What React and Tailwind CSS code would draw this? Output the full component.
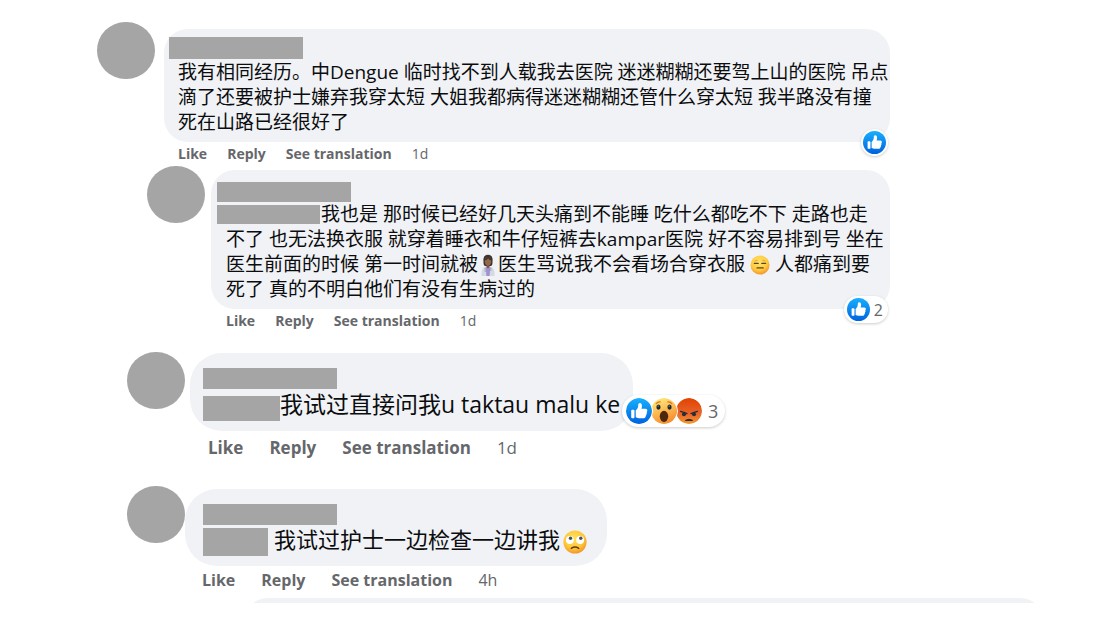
import React from 'react';

const LikeIcon = ({ className }) => (
    <svg viewBox="0 0 16 16" role="img" aria-label="Like" className={className}>
        <defs>
            <linearGradient id="likeFill" x1="0" y1="0" x2="0" y2="1">
                <stop offset="0" stopColor="#18afff" />
                <stop offset="1" stopColor="#0062df" />
            </linearGradient>
        </defs>
        <circle cx="8" cy="8" r="8" fill="url(#likeFill)" />
        <rect x="3.2" y="7.2" width="2" height="5.2" rx="0.6" fill="#fff" />
        <path
            d="M6 7.6C7.2 6.6 7.5 5.7 7.5 4.4C7.5 3.4 8 3 8.5 3C9.5 3 9.9 4 9.8 5C9.8 5.6 9.6 6.2 9.5 6.6H12C12.8 6.6 13.2 7.2 13.1 7.8C13.1 8.2 12.9 8.5 12.7 8.6C13 8.9 13 9.6 12.5 9.9C12.7 10.3 12.5 10.9 12.1 11.1C12.2 11.9 11.7 12.4 10.9 12.4H8.6C7.5 12.4 6.7 12.1 6 11.8Z"
            fill="#fff"
        />
    </svg>
);

const WowIcon = ({ className }) => (
    <svg viewBox="0 0 16 16" role="img" aria-label="Wow" className={className}>
        <defs>
            <linearGradient id="wowFill" x1="0.3" y1="0" x2="0.7" y2="1">
                <stop offset="0" stopColor="#ffe97a" />
                <stop offset="1" stopColor="#f68628" />
            </linearGradient>
        </defs>
        <circle cx="8" cy="8" r="8" fill="url(#wowFill)" />
        <path d="M3.2 3.5Q4.3 2.1 5.7 2.4M10.3 2.4Q11.7 2.1 12.8 3.5" fill="none" stroke="#e0761a" strokeWidth="0.7" strokeLinecap="round" />
        <ellipse cx="4.6" cy="5.6" rx="1.3" ry="1.6" fill="#1c2830" />
        <ellipse cx="11.4" cy="5.6" rx="1.3" ry="1.6" fill="#1c2830" />
        <circle cx="4.4" cy="5" r="0.5" fill="#5a7184" />
        <circle cx="11.2" cy="5" r="0.5" fill="#5a7184" />
        <ellipse cx="8" cy="11.3" rx="2.6" ry="3.4" fill="#4b280e" />
    </svg>
);

const AngryIcon = ({ className }) => (
    <svg viewBox="0 0 16 16" role="img" aria-label="Angry" className={className}>
        <defs>
            <linearGradient id="angryFill" x1="0" y1="0" x2="0" y2="1">
                <stop offset="0" stopColor="#e04300" />
                <stop offset="0.6" stopColor="#e8642a" />
                <stop offset="1" stopColor="#f79a2c" />
            </linearGradient>
        </defs>
        <circle cx="8" cy="8" r="8" fill="url(#angryFill)" />
        <path d="M2.8 8.2Q4.8 8.8 6.8 9.6M13.2 8.2Q11.2 8.8 9.2 9.6" fill="none" stroke="#262c38" strokeWidth="0.8" strokeLinecap="round" />
        <circle cx="4.9" cy="10" r="1.2" fill="#262c38" />
        <circle cx="11.1" cy="10" r="1.2" fill="#262c38" />
        <path d="M5.8 13.8Q8 12.4 10.2 13.8Z" fill="#262c38" stroke="#262c38" strokeWidth="0.6" />
    </svg>
);

const ExpressionlessEmoji = () => (
    <svg viewBox="0 0 20 20" role="img" aria-label="expressionless face" className="mx-[5px] inline-block size-5 align-[-4px]">
        <defs>
            <radialGradient id="flatFill" cx="0.45" cy="0.35" r="0.7">
                <stop offset="0" stopColor="#ffe36a" />
                <stop offset="0.6" stopColor="#ffcb3d" />
                <stop offset="1" stopColor="#f0892e" />
            </radialGradient>
        </defs>
        <circle cx="10" cy="10" r="9.5" fill="url(#flatFill)" />
        <path d="M4.4 8.4H8.2M11.8 8.4H15.6M7 12.9H13.2" stroke="#5d4327" strokeWidth="1.3" strokeLinecap="round" />
        <path d="M4.6 6.2Q6 5.2 7.6 5.6M12.4 5.6Q14 5.2 15.4 6.2" fill="none" stroke="#e2922d" strokeWidth="0.8" />
    </svg>
);

const RollingEyesEmoji = () => (
    <svg viewBox="0 0 22 22" role="img" aria-label="face with rolling eyes" className="ml-[3px] inline-block size-6 align-[-6px]">
        <defs>
            <radialGradient id="rollFill" cx="0.45" cy="0.35" r="0.7">
                <stop offset="0" stopColor="#ffe15c" />
                <stop offset="0.6" stopColor="#ffc83a" />
                <stop offset="1" stopColor="#f08a24" />
            </radialGradient>
        </defs>
        <circle cx="11" cy="11" r="10.6" fill="url(#rollFill)" />
        <circle cx="6.3" cy="9.2" r="3.6" fill="#fff" />
        <circle cx="15.7" cy="9.2" r="3.6" fill="#fff" />
        <circle cx="6.9" cy="7.6" r="1.6" fill="#4b5159" />
        <circle cx="16.3" cy="7.6" r="1.6" fill="#4b5159" />
        <path d="M7.6 16.8Q11 14.4 14.4 16.8" fill="none" stroke="#5f3b16" strokeWidth="1.3" strokeLinecap="round" />
    </svg>
);

const DoctorEmoji = () => (
    <svg viewBox="0 0 20 22" role="img" aria-label="health worker" className="inline-block h-[22px] w-5 align-[-5px]">
        <path d="M5.5 8Q4.6 0.8 10 0.8Q15.4 0.8 14.5 8Q14.6 11.5 13 12H7Q5.4 11.5 5.5 8Z" fill="#3d342f" />
        <path d="M3.4 22Q3 13.8 7.2 13L10 14.6L12.8 13Q17 13.8 16.6 22Z" fill="#d3dae6" />
        <path d="M7.8 12.6H12.2L11.6 22H8.4Z" fill="#a48fd0" />
        <path d="M8.6 10.5H11.4V13L10 14.6L8.6 13Z" fill="#7b5338" />
        <ellipse cx="10" cy="7.3" rx="3.2" ry="4.2" fill="#94664a" />
        <path d="M6.7 6.6Q7.4 2.8 10.4 3.1Q13.2 3.2 13.3 6.6Q11 5.8 10.2 4.2Q9 6 6.7 6.6Z" fill="#3d342f" />
        <path d="M7.2 13.5V18M12.8 13.5V17" stroke="#8f98a8" strokeWidth="0.8" />
    </svg>
);

const Reactions = ({ className, children }) => (
    <div className={`absolute flex items-center rounded-full bg-white shadow-[0_1px_3px_rgba(0,0,0,0.2)] ${className}`}>
        {children}
    </div>
);

// grey block that hides a name
const Redacted = ({ className }) => <span className={`block bg-[#a5a5a5] ${className}`} />;

const Actions = ({ time, className }) => (
    <div className={`flex items-center text-[#65676b] ${className}`}>
        <button type="button" className="font-bold">Like</button>
        <button type="button" className="font-bold">Reply</button>
        <button type="button" className="font-bold">See translation</button>
        <a href="#comment">{time}</a>
    </div>
);

const Comment = ({ className, bodyClass, bubbleClass, actionsClass, time, reactions, children }) => (
    <article className={`flex items-start ${className}`}>
        <div className="h-[57px] w-[58px] shrink-0 rounded-full bg-[#a5a5a5]" />
        <div className={`min-w-0 ${bodyClass}`}>
            <div className={`relative bg-[#f0f2f5] ${bubbleClass}`}>
                {children}
                {reactions}
            </div>
            <Actions time={time} className={actionsClass} />
        </div>
    </article>
);

export default function App() {
    return (
        <main className="bg-white pt-[22px] font-['Open_Sans','Noto_Sans_CJK_SC',sans-serif] text-[#0b0c0e]">
            <Comment
                className="ml-[97px] gap-[9px]"
                bodyClass="pt-[7px]"
                bubbleClass="w-[726px] rounded-3xl pt-2 pb-[7px] pl-[14px]"
                actionsClass="h-6 gap-5 pl-[14px] text-sm"
                time="1d"
                reactions={
                    <Reactions className="right-[2px] -bottom-[14px] p-[2px]">
                        <LikeIcon className="size-[23px]" />
                    </Reactions>
                }
            >
                <Redacted className="-ml-[9px] h-[22px] w-[134px]" />
                <p className="mt-px text-[19px] leading-[25px] whitespace-nowrap">
                    我有相同经历。中Dengue 临时找不到人载我去医院 迷迷糊糊还要驾上山的医院 吊点
                    <br />
                    滴了还要被护士嫌弃我穿太短 大姐我都病得迷迷糊糊还管什么穿太短 我半路没有撞
                    <br />
                    死在山路已经很好了
                </p>
            </Comment>

            <Comment
                className="ml-[147px] gap-[6px]"
                bodyClass="pt-1"
                bubbleClass="w-[679px] rounded-3xl pt-3 pb-[7px] pl-[15px]"
                actionsClass="h-6 gap-5 pl-[15px] text-sm"
                time="1d"
                reactions={
                    <Reactions className="right-[2px] -bottom-[14px] gap-1 py-[2px] pr-[5px] pl-[3px]">
                        <LikeIcon className="size-[23px]" />
                        <span className="text-base leading-none text-[#65676b]">2</span>
                    </Reactions>
                }
            >
                <Redacted className="-ml-[9px] h-5 w-[134px]" />
                <div className="text-[19px] leading-[25px] whitespace-nowrap">
                    <p className="-ml-[9px] flex items-center gap-px">
                        <Redacted className="h-[19px] w-[103px]" />
                        <span>我也是 那时候已经好几天头痛到不能睡 吃什么都吃不下 走路也走</span>
                    </p>
                    <p className="h-[25px]">不了 也无法换衣服 就穿着睡衣和牛仔短裤去kampar医院 好不容易排到号 坐在</p>
                    <p className="h-[25px]">
                        医生前面的时候 第一时间就被
                        <DoctorEmoji />
                        医生骂说我不会看场合穿衣服
                        <ExpressionlessEmoji />
                        人都痛到要
                    </p>
                    <p className="h-[25px]">死了 真的不明白他们有没有生病过的</p>
                </div>
            </Comment>

            <Comment
                className="mt-[19px] ml-[127px] gap-[5px]"
                bodyClass="pt-px"
                bubbleClass="w-fit rounded-[32px] pt-[15px] pr-[13px] pb-[10px] pl-[13px]"
                actionsClass="h-[33px] gap-[26px] pl-[18px] text-[17px]"
                time="1d"
                reactions={
                    <Reactions className="-right-[92px] bottom-1 py-[2px] pr-[7px] pl-[3px]">
                        <LikeIcon className="z-20 size-7 rounded-full border border-white" />
                        <WowIcon className="z-10 -ml-[3px] size-7 rounded-full border border-white" />
                        <AngryIcon className="-ml-[3px] size-7 rounded-full border border-white" />
                        <span className="ml-[5px] text-lg leading-none text-[#65676b]">3</span>
                    </Reactions>
                }
            >
                <Redacted className="h-[21px] w-[134px]" />
                <p className="mt-[2px] flex h-[30px] items-end text-[23px] leading-[27px] whitespace-nowrap">
                    <Redacted className="h-[25px] w-[77px]" />
                    <span className="self-start">我试过直接问我u taktau malu ke</span>
                </p>
            </Comment>

            <Comment
                className="mt-[22px] ml-[127px]"
                bodyClass="pt-[3px]"
                bubbleClass="w-fit rounded-[32px] pt-[15px] pr-5 pb-[10px] pl-[18px]"
                actionsClass="h-[27px] gap-[26px] pl-[17px] text-base"
                time="4h"
            >
                <Redacted className="h-[21px] w-[134px]" />
                <p className="mt-px flex h-[30px] items-end gap-[6px] text-[22px] leading-[26px] whitespace-nowrap">
                    <Redacted className="h-7 w-[65px]" />
                    <span className="self-start">
                        我试过护士一边检查一边讲我
                        <RollingEyesEmoji />
                    </span>
                </p>
            </Comment>

            {/* top edge of the next comment */}
            <div className="mt-[5px] mr-[56px] ml-[244px] h-[5px] overflow-hidden">
                <div className="h-12 rounded-3xl bg-[#f0f2f5]" />
            </div>
        </main>
    );
}
